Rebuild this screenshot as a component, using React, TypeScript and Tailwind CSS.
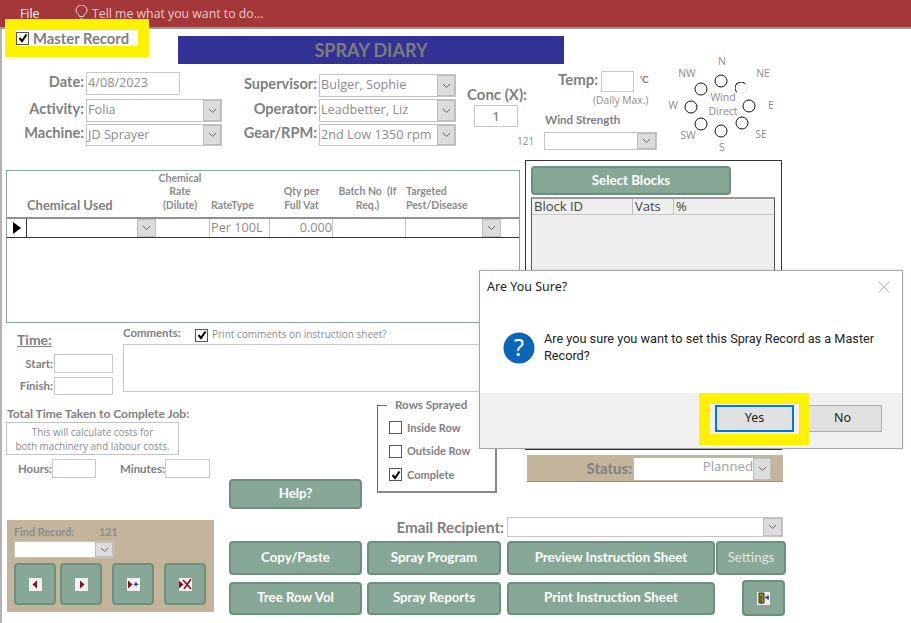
import type {ReactNode} from "react";

function Chevron() {
    return (
        <svg width="9" height="6" viewBox="0 0 9 6" fill="none" stroke="#666" strokeWidth="1">
            <path d="M1 1l3.5 3.5L8 1"/>
        </svg>
    );
}

function Combo(props: { w: string, h?: string, text?: string, btn?: string }) {
    return (
        <div className={`flex ${props.w} ${props.h ?? "h-[23px]"} border border-[#c4c4c4] bg-white`}>
            <div className="flex-1 min-w-0 pl-[1px] text-[12.7px] leading-[18px] text-[#8c8c8c] whitespace-nowrap overflow-hidden">
                {props.text}
            </div>
            <div className={`${props.btn ?? "w-[18px]"} shrink-0 grid place-content-center bg-[#dcdcdc] border border-[#bdbdbd]`}>
                <Chevron/>
            </div>
        </div>
    );
}

function Box(props: { className: string, text?: string }) {
    return (
        <div className={`border border-[#c8c8c8] bg-white text-[#8c8c8c] ${props.className}`}>
            {props.text}
        </div>
    );
}

function Check(props: { on?: boolean }) {
    return (
        <div className="w-[13px] h-[13px] shrink-0 border border-[#555] bg-white grid place-content-center">
            {props.on && (
                <svg width="10" height="10" viewBox="0 0 10 10" fill="none" stroke="#000" strokeWidth="2">
                    <path d="M1.5 5l2.5 3L8.5 1.5"/>
                </svg>
            )}
        </div>
    );
}

function FormRow(props: { label: string, labelW: string, children: ReactNode }) {
    return (
        <div className="flex items-center">
            <div className={`${props.labelW} shrink-0 text-right font-['Lato'] font-bold text-[14.6px] leading-[18px] text-[#808080] pr-[2px] pb-[4px]`}>
                {props.label}
            </div>
            {props.children}
        </div>
    );
}

function GreenBtn(props: { className: string, children: ReactNode }) {
    return (
        <div className={`grid place-content-center bg-[#87a896] border-2 border-[#6f8f7e] rounded-[4px] font-['Lato'] font-bold text-[13.3px] text-white ${props.className}`}>
            {props.children}
        </div>
    );
}

function NavIcon(props: { kind: "prev" | "next" | "new" | "del" }) {
    return (
        <svg width="13" height="13" viewBox="0 0 13 13">
            <rect width="13" height="13" fill="#f2f2f2"/>
            {props.kind === "prev" && <path d="M8 2.5v8L3.5 6.5z" fill="#8b0f14"/>}
            {props.kind === "next" && <path d="M5 2.5v8l4.5-4z" fill="#8b0f14"/>}
            {props.kind === "new" && <>
                <path d="M1 2.5v8l4.5-4z" fill="#8b0f14"/>
                <path d="M9 3.5l.8 2 2.2.8-2.2.8-.8 2-.8-2-2.2-.8 2.2-.8z" fill="#1f2fb0"/>
            </>}
            {props.kind === "del" && <>
                <path d="M0 2.5v8l4.5-4z" fill="#8b0f14"/>
                <path d="M4 2l8 9M12 1L5 11" stroke="#8b0f14" strokeWidth="1.6" fill="none"/>
            </>}
        </svg>
    );
}

const compassLabels = [
    {t: "N", x: 57, y: 6}, {t: "NE", x: 98, y: 18}, {t: "E", x: 106, y: 50}, {t: "SE", x: 96, y: 79},
    {t: "S", x: 57, y: 92}, {t: "SW", x: 23, y: 80}, {t: "W", x: 8, y: 50}, {t: "NW", x: 22, y: 18},
    {t: "Wind", x: 58, y: 42}, {t: "Direct", x: 58, y: 56},
];

const compassDots = [
    [56, 26], [76, 33], [84, 51], [77, 68], [56, 76], [36, 69], [26, 52], [36, 34],
];

function Compass() {
    return (
        <div className="relative w-[115px] h-[100px] shrink-0 -mt-[15px] text-[10.5px] text-[#8c8c8c]">
            {compassLabels.map(l => (
                <span key={l.t} className="absolute -translate-x-1/2 -translate-y-1/2 leading-none"
                      style={{left: l.x, top: l.y}}>{l.t}</span>
            ))}
            {compassDots.map(([x, y], i) => (
                <span key={i} className={`absolute w-[13px] h-[13px] rounded-full border-[1.5px] -translate-x-1/2 -translate-y-1/2 ${i === 1 ? "border-t-[#111] border-l-[#111] border-r-[#ddd] border-b-[#eee]" : "border-[#111]"}`}
                      style={{left: x, top: y}}/>
            ))}
        </div>
    );
}

function HeaderCell(props: { className: string, children: ReactNode }) {
    return (
        <div className={`shrink-0 font-['Lato'] font-bold text-[10.5px] leading-[13.5px] text-[#8c8c8c] ${props.className}`}>
            {props.children}
        </div>
    );
}

function ChemicalSubform() {
    return (
        <div className="ml-[6px] mt-[10px] w-[514px] h-[153px] border border-[#8aa89a] bg-white">
            <div className="flex items-end h-[46px] pb-[5px]">
                <div className="w-[20px] shrink-0"/>
                <div className="w-[125px] shrink-0 font-['Lato'] font-bold text-[13px] leading-none text-[#808080]">Chemical Used</div>
                <HeaderCell className="w-[56px] text-center">Chemical<br/>Rate<br/>(Dilute)</HeaderCell>
                <HeaderCell className="w-[62px] pl-[3px]">RateType</HeaderCell>
                <HeaderCell className="w-[63px] text-center">Qty per<br/>Full Vat</HeaderCell>
                <HeaderCell className="w-[69px] text-center mr-[4px]">Batch No &nbsp;(If<br/>Req.)</HeaderCell>
                <HeaderCell className="w-[95px]">Targeted<br/>Pest/Disease</HeaderCell>
            </div>
            <div className="flex h-[21px] border-t-2 border-t-[#909090] border-b border-b-[#333] text-[12.7px] leading-[16px] text-[#8c8c8c]">
                <div className="w-[20px] shrink-0 grid place-content-center border-r border-[#333]">
                    <svg width="8" height="12" viewBox="0 0 8 12"><path d="M0 0l8 6-8 6z" fill="#000"/></svg>
                </div>
                <div className="w-[110px] shrink-0"/>
                <div className="w-[19px] shrink-0 grid place-content-center bg-[#dcdcdc] border border-[#bdbdbd]"><Chevron/></div>
                <div className="w-[54px] shrink-0 border-r border-[#c4c4c4]"/>
                <div className="w-[60px] shrink-0 border-r border-[#c4c4c4] pl-[1px]">Per 100L</div>
                <div className="w-[63px] shrink-0 border-r border-[#c4c4c4] text-right">0.000</div>
                <div className="w-[73px] shrink-0 border-r border-[#c4c4c4]"/>
                <div className="w-[76px] shrink-0"/>
                <div className="w-[19px] shrink-0 grid place-content-center bg-[#dcdcdc] border border-[#bdbdbd]"><Chevron/></div>
            </div>
        </div>
    );
}

function TimeAndComments() {
    return (
        <div className="flex mt-[3px]">
            <div className="w-[123px] shrink-0 pl-[17px] pt-[5px] -mb-[4px] font-['Lato'] font-bold text-[#808080]">
                <div className="text-[14px] leading-[17px] underline">Time:</div>
                <div className="flex items-center mt-[6px] -ml-[17px]">
                    <div className="w-[54px] text-right text-[11.5px] pr-[1px]">Start:</div>
                    <Box className="w-[59px] h-[19px]"/>
                </div>
                <div className="flex items-center mt-[4px] -ml-[17px]">
                    <div className="w-[54px] text-right text-[11.5px] pr-[1px]">Finish:</div>
                    <Box className="w-[59px] h-[18px]"/>
                </div>
            </div>
            <div className="flex-1 min-w-0">
                <div className="flex items-center h-[18px]">
                    <div className="w-[72px] font-['Lato'] font-bold text-[11.4px] text-[#808080] pb-[5px]">Comments:</div>
                    <Check on/>
                    <div className="ml-[4px] text-[10px] text-[#8c8c8c] pb-[1px]">Print comments on instruction sheet?</div>
                </div>
                <Box className="h-[48px] mr-[20px] border-[#c4c4c4]"/>
            </div>
        </div>
    );
}

function TotalTime() {
    return (
        <div className="w-[229px] shrink-0 pl-[6px] pt-[15px]">
            <div className="font-['Lato'] font-bold text-[12px] leading-[14px] text-[#808080] pl-[1px] whitespace-nowrap">Total Time Taken to Complete Job:</div>
            <div className="w-[173px] h-[33px] mt-[1px] border border-[#c4c4c4] text-center text-[9.9px] leading-[14px] pt-[2px] text-[#8c8c8c]">
                This will calculate costs for<br/>both machinery and labour costs.
            </div>
            <div className="flex items-center mt-[4px] font-['Lato'] font-bold text-[11.5px] text-[#808080]">
                <div className="w-[46px] text-right">Hours:</div>
                <Box className="w-[44px] h-[19px]"/>
                <div className="w-[69px] text-right">Minutes:</div>
                <Box className="w-[45px] h-[19px]"/>
            </div>
        </div>
    );
}

function RowsSprayed() {
    const rows = [{t: "Inside Row"}, {t: "Outside Row"}, {t: "Complete", on: true}];
    return (
        <div className="relative w-[120px] h-[88px] shrink-0 mt-[13px] ml-[15px] border-l border-t border-l-[#666] border-t-[#666] border-r-2 border-b-2 border-r-[#888] border-b-[#888] pl-[11px] pt-[10px]">
            <div className="absolute -top-[8px] left-[9px] pl-[8px] pr-[16px] bg-white font-['Lato'] font-bold text-[11.6px] leading-[13px] text-[#808080] whitespace-nowrap">Rows Sprayed</div>
            {rows.map(r => (
                <div key={r.t} className="flex items-center h-[23.5px] gap-[5px] font-['Lato'] font-bold text-[11px] text-[#808080]">
                    <Check on={r.on}/>
                    {r.t}
                </div>
            ))}
        </div>
    );
}

function BlocksPanel() {
    return (
        <div className="w-[258px]">
            <div className="w-[257px] h-[290px] border border-[#333] pl-[5px] pt-[5px]">
                <GreenBtn className="w-[200px] h-[29px]">Select Blocks</GreenBtn>
                <div className="w-[244px] h-[240px] mt-[2px] bg-[#efefef] border-x border-t-2 border-x-[#555] border-t-[#999]">
                    <div className="flex h-[16px] border-b border-[#c8c8c8] text-[13px] leading-[15px] text-[#444]">
                        <div className="w-[101px] pl-[2px] border-r border-[#c0c0c0]">Block ID</div>
                        <div className="w-[41px] pl-[2px] border-r border-[#c0c0c0]">Vats</div>
                        <div className="pl-[2px]">%</div>
                    </div>
                </div>
            </div>
            <div className="flex items-center justify-end w-[256px] h-[27px] mt-[5px] ml-[2px] bg-[#c2b59b] border-b border-[#8f8f8f] pr-[12px] pt-[2px]">
                <div className="font-['Lato'] font-bold text-[15px] leading-[18px] text-[#808080] mr-[2px] pb-[3px]">Status:</div>
                <div className="flex w-[137px] h-[22px] bg-white">
                    <div className="flex-1 text-right text-[13.2px] leading-[17px] text-[#a0a0a0]">Planned</div>
                    <div className="w-[18px] grid place-content-center bg-[#dcdcdc] border border-[#bdbdbd]"><Chevron/></div>
                </div>
            </div>
        </div>
    );
}

function FindRecord() {
    const cls = "w-[42px] h-[42px] shrink-0";
    return (
        <div className="w-[207px] h-[92px] ml-[7px] bg-[#c2b59b] pl-[7px] pt-[5px]">
            <div className="flex font-['Lato'] font-bold text-[10.8px] leading-[13px] text-[#8c8c8c] mb-[3px]">
                <div className="w-[85px]">Find Record:</div>
                <div>121</div>
            </div>
            <Combo w="w-[100px]" h="h-[17px]"/>
            <div className="flex mt-[5px]">
                <GreenBtn className={cls}><NavIcon kind="prev"/></GreenBtn>
                <GreenBtn className={`${cls} ml-[4px]`}><NavIcon kind="next"/></GreenBtn>
                <GreenBtn className={`${cls} ml-[10px]`}><NavIcon kind="new"/></GreenBtn>
                <GreenBtn className={`${cls} ml-[10px]`}><NavIcon kind="del"/></GreenBtn>
            </div>
        </div>
    );
}

function Actions() {
    return (
        <div className="ml-[15px] -mt-[3px]">
            <div className="flex items-center">
                <div className="w-[278px] shrink-0 text-right pr-[3px] font-['Lato'] font-bold text-[15.2px] leading-[18px] text-[#808080] pb-[1px]">Email Recipient:</div>
                <Combo w="w-[276px]" h="h-[20px]" btn="w-[19px]"/>
            </div>
            <div className="flex mt-[4px] gap-[5px]">
                <GreenBtn className="w-[133px] h-[34px]">Copy/Paste</GreenBtn>
                <GreenBtn className="w-[134px] h-[34px]">Spray Program</GreenBtn>
                <GreenBtn className="w-[208px] h-[34px] ml-[1px]">Preview Instruction Sheet</GreenBtn>
                <GreenBtn className="w-[70px] h-[34px] -ml-[4px] !font-normal !text-[#dfe7e2]">Settings</GreenBtn>
            </div>
            <div className="flex mt-[5px] gap-[5px] items-center">
                <GreenBtn className="w-[133px] h-[33px]">Tree Row Vol</GreenBtn>
                <GreenBtn className="w-[134px] h-[33px]">Spray Reports</GreenBtn>
                <GreenBtn className="w-[208px] h-[33px] ml-[1px]">Print Instruction Sheet</GreenBtn>
                <GreenBtn className="w-[43px] h-[36px] ml-[22px]">
                    <svg width="13" height="13" viewBox="0 0 13 13">
                        <rect width="13" height="13" fill="#eee"/>
                        <path d="M2 1h5v10H2z" fill="#9a8a1c" stroke="#333" strokeWidth="1"/>
                        <path d="M4 12V4" stroke="#5a5200" strokeWidth="1.4"/>
                        <path d="M8 5.5h3M11 3.5v4" stroke="#1f2fb0" strokeWidth="1.6"/>
                    </svg>
                </GreenBtn>
            </div>
        </div>
    );
}

function ConfirmDialog() {
    return (
        <div className="absolute left-[479px] top-[270px] w-[424px] h-[179px] flex flex-col bg-white border border-[#a8a8a8] font-['Noto_Sans'] text-[#222] shadow-[0_0_2px_rgba(0,0,0,0.15)]">
            <div className="flex items-center justify-between h-[31px] pl-[7px] pr-[12px] text-[12.5px] pt-[1px]">
                Are You Sure?
                <svg width="12" height="12" viewBox="0 0 12 12" stroke="#b8b8b8" strokeWidth="1"><path d="M.5.5l11 11M11.5.5l-11 11"/></svg>
            </div>
            <div className="flex flex-1 pl-[23px] pt-[30px]">
                <svg width="32" height="32" viewBox="0 0 32 32" className="shrink-0">
                    <circle cx="16" cy="16" r="15.5" fill="#0a64b8"/>
                    <text x="16" y="24" textAnchor="middle" fontSize="23" fontFamily="Noto Sans" fill="#fff">?</text>
                </svg>
                <div className="ml-[9px] w-[340px] -mt-[1px] font-['Roboto'] text-[12.7px] leading-[16.5px]">
                    Are you sure you want to set this Spray Record as a Master Record?
                </div>
            </div>
            <div className="flex justify-end gap-[9px] h-[55px] bg-[#f0f0f0] pt-[12px] pr-[20px] text-[12.5px]">
                <div className="w-[79px] h-[27px] grid place-content-center bg-[#e1e1e1] border-2 border-[#0078d7]">Yes</div>
                <div className="w-[79px] h-[27px] grid place-content-center bg-[#e1e1e1] border border-[#adadad]">No</div>
            </div>
        </div>
    );
}

export default function App() {
    return (
        <div className="relative w-[911px] h-[623px] overflow-hidden bg-white font-['Open_Sans',sans-serif]">
            <div className="flex items-center h-[29px] bg-[#a4373a] border-b-2 border-[#999] pt-[2px] text-[12.3px]">
                <div className="ml-[20px] w-[55px] text-white">File</div>
                <svg width="13" height="16" viewBox="0 0 13 16" fill="none" stroke="#f2dcdc" strokeWidth="1" className="-mt-[3px]">
                    <path d="M4.5 11.5C4.5 9.5 1 8.5 1 5.5a5.5 5.5 0 0 1 11 0c0 3-3.5 4-3.5 6zM5 14h3"/>
                </svg>
                <div className="ml-[4px] text-[#e6caca]">Tell me what you want to do...</div>
            </div>

            <div className="shadow-[inset_2px_0_0_#b4b4b4] h-[594px]">
                <div className="h-[131px]">
                    <div className="ml-[178px] pt-[7px]">
                        <div className="w-[386px] h-[28px] bg-[#323296] grid place-content-center font-['Lato'] font-bold text-[18px] leading-[24px] text-[#7c7c7c]">
                            SPRAY DIARY
                        </div>
                    </div>
                    <div className="flex pt-[6px]">
                        <div className="w-[222px] shrink-0 pt-[2px]">
                            <FormRow label="Date:" labelW="w-[86px]"><Box className="w-[94px] h-[23px] text-[12.7px] leading-[18px] pl-[1px]" text="4/08/2023"/></FormRow>
                            <div className="h-[4px]"/>
                            <FormRow label="Activity:" labelW="w-[86px]"><Combo w="w-[136px]" text="Folia"/></FormRow>
                            <div className="h-[2px]"/>
                            <FormRow label="Machine:" labelW="w-[86px]"><Combo w="w-[136px]" h="h-[22px]" text="JD Sprayer"/></FormRow>
                        </div>
                        <div className="w-[234px] shrink-0 pt-[4px]">
                            <FormRow label="Supervisor:" labelW="w-[97px]"><Combo w="w-[137px]" text="Bulger, Sophie"/></FormRow>
                            <div className="h-[2px]"/>
                            <FormRow label="Operator:" labelW="w-[97px]"><Combo w="w-[137px]" text="Leadbetter, Liz"/></FormRow>
                            <div className="h-[2px]"/>
                            <FormRow label="Gear/RPM:" labelW="w-[97px]"><Combo w="w-[137px]" h="h-[22px]" text="2nd Low 1350 rpm"/></FormRow>
                        </div>
                        <div className="w-[59px] ml-[11px] shrink-0 pt-[14px]">
                            <div className="font-['Lato'] font-bold text-[15px] leading-[20px] text-[#808080] whitespace-nowrap">Conc (X):</div>
                            <Box className="ml-[7px] mt-[1px] w-[44px] h-[22px] text-center text-[13px] leading-[20px] font-semibold" text="1"/>
                        </div>
                        <div className="w-[139px] shrink-0">
                            <div className="flex items-center ml-[32px]">
                                <div className="w-[43px] font-['Lato'] font-bold text-[15px] text-[#808080] pb-[4px] leading-[18px]">Temp:</div>
                                <Box className="w-[33px] h-[21px]"/>
                                <div className="ml-[6px] font-['Lato'] font-bold text-[10px] text-[#808080] -mt-[3px]">'C</div>
                            </div>
                            <div className="ml-[67px] mt-[1px] text-[10.3px] leading-[15px] text-[#8c8c8c]">(Daily Max.)</div>
                            <div className="ml-[19px] mt-[5px] font-['Lato'] font-bold text-[11.6px] leading-[14px] text-[#808080]">Wind Strength</div>
                            <div className="flex items-center mt-[5px] -ml-[9px]">
                                <div className="w-[27px] text-[10px] text-[#8c8c8c]">121</div>
                                <Combo w="w-[113px]" h="h-[18px]" btn="w-[19px]"/>
                            </div>
                        </div>
                        <Compass/>
                    </div>
                </div>

                <div className="flex">
                    <div className="w-[525px] shrink-0">
                        <ChemicalSubform/>
                        <TimeAndComments/>
                        <div className="flex">
                            <TotalTime/>
                            <div className="w-[133px] shrink-0 pt-[87px]">
                                <GreenBtn className="w-[133px] h-[30px]">Help?</GreenBtn>
                            </div>
                            <RowsSprayed/>
                        </div>
                    </div>
                    <BlocksPanel/>
                </div>

                <div className="flex mt-[11px]">
                    <FindRecord/>
                    <Actions/>
                </div>
            </div>

            <div className="absolute left-[5px] top-[19px] w-[144px] h-[38px] border-[11px] border-[#fff200] bg-white flex items-center gap-[4px]">
                <Check on/>
                <span className="font-['Lato'] font-bold text-[14.8px] text-[#808080] whitespace-nowrap leading-none">Master Record</span>
            </div>

            <ConfirmDialog/>
            <div className="absolute left-[699px] top-[393px] w-[110px] h-[52px] border-[11px] border-r-[10px] border-[#fff200]"/>
        </div>
    );
}
